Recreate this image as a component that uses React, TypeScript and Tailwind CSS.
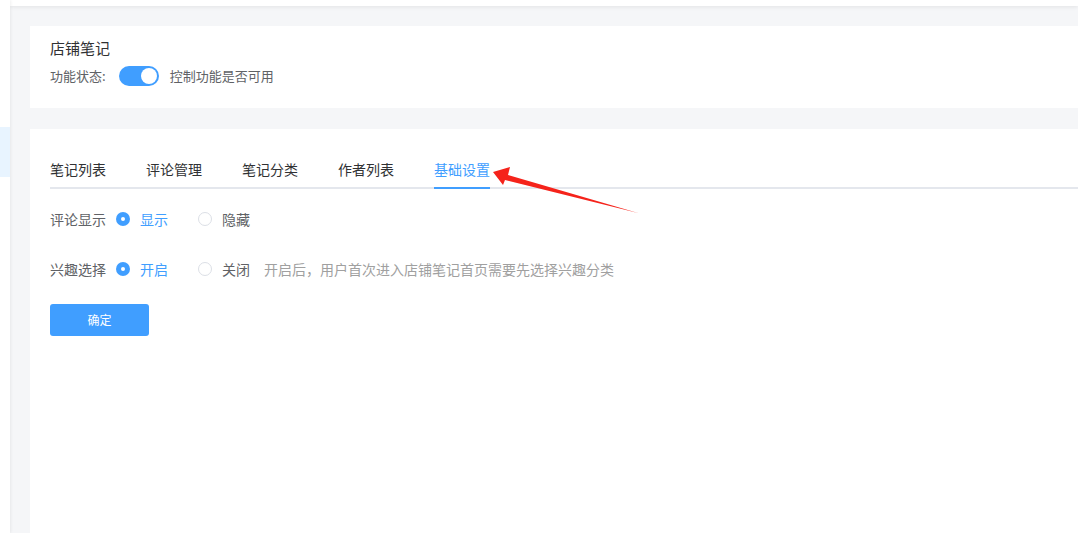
import { useState } from "react";

const tabs = ["笔记列表", "评论管理", "笔记分类", "作者列表", "基础设置"];

function Radio({ checked, label, onClick }: { checked: boolean; label: string; onClick: () => void }) {
  return (
    <button type="button" onClick={onClick} className="flex items-center gap-[10px]">
      {checked ? (
        <span className="flex h-[14px] w-[14px] items-center justify-center rounded-full bg-[#409eff]">
          <span className="h-[4px] w-[4px] rounded-full bg-white" />
        </span>
      ) : (
        <span className="h-[14px] w-[14px] rounded-full border border-[#dcdfe6] bg-white" />
      )}
      <span className={checked ? "text-[#409eff]" : "text-[#606266]"}>{label}</span>
    </button>
  );
}

export default function App() {
  const [enabled, setEnabled] = useState(true);
  const [showComments, setShowComments] = useState(true);
  const [interest, setInterest] = useState(true);

  return (
    <div
      className="relative flex h-[533px] w-full overflow-hidden bg-[#f5f6f8] text-[14px]"
      style={{ fontFamily: '"Noto Sans CJK SC", "Noto Sans", sans-serif' }}
    >
      <aside className="z-10 flex w-[10px] shrink-0 flex-col bg-white shadow-[1px_0_3px_rgba(0,0,0,0.06)]">
        <div className="mt-[127px] h-[50px] bg-[#e8f4ff]" />
      </aside>

      <main className="flex min-w-0 flex-1 flex-col">
        <div className="h-[6px] shrink-0 bg-white shadow-[0_1px_4px_rgba(0,0,0,0.08)]" />

        <div className="flex flex-1 flex-col gap-[21px] pl-5 pt-5">
          <section className="h-[82px] bg-white pl-5 pt-[12px]">
            <h2 className="h-5 text-[15px] leading-5 text-[#303133]">店铺笔记</h2>
            <div className="mt-2 flex h-5 items-center text-[13px] text-[#606266]">
              <span>功能状态:</span>
              <button
                type="button"
                onClick={() => setEnabled((v) => !v)}
                className={`ml-[13px] flex h-5 w-10 items-center rounded-full px-[2px] ${
                  enabled ? "justify-end bg-[#409eff]" : "justify-start bg-[#dcdfe6]"
                }`}
              >
                <span className="h-4 w-4 rounded-full bg-white" />
              </button>
              <span className="ml-[11px]">控制功能是否可用</span>
            </div>
          </section>

          <section className="relative flex-1 bg-white pl-5 pt-5">
            <div className="flex h-10 gap-10 border-b-2 border-[#e4e7ed]">
              {tabs.map((tab) => {
                const active = tab === "基础设置";
                return (
                  <div
                    key={tab}
                    className={`-mb-[2px] h-10 border-b-2 leading-10 ${
                      active ? "border-[#409eff] text-[#409eff]" : "border-transparent text-[#303133]"
                    }`}
                  >
                    {tab}
                  </div>
                );
              })}
            </div>

            <div className="mt-5 flex h-5 items-center text-[#606266]">
              <span className="w-[66px]">评论显示</span>
              <Radio checked={showComments} label="显示" onClick={() => setShowComments(true)} />
              <div className="ml-[30px]">
                <Radio checked={!showComments} label="隐藏" onClick={() => setShowComments(false)} />
              </div>
            </div>

            <div className="mt-[30px] flex h-5 items-center text-[#606266]">
              <span className="w-[66px]">兴趣选择</span>
              <Radio checked={interest} label="开启" onClick={() => setInterest(true)} />
              <div className="ml-[30px]">
                <Radio checked={!interest} label="关闭" onClick={() => setInterest(false)} />
              </div>
              <span className="ml-[14px] text-[#a0a0a0]">
                开启后，用户首次进入店铺笔记首页需要先选择兴趣分类
              </span>
            </div>

            <button
              type="button"
              className="mt-[25px] h-8 w-[99px] rounded-[3px] bg-[#409eff] text-[12px] text-white"
            >
              确定
            </button>

            <svg
              className="pointer-events-none absolute left-[-30px] top-[-129px]"
              width="700"
              height="260"
              viewBox="0 0 700 260"
            >
              <polygon points="493,172 510,167 508,175 638,213 505,180 503,185" fill="#f5231b" />
            </svg>
          </section>
        </div>
      </main>
    </div>
  );
}
